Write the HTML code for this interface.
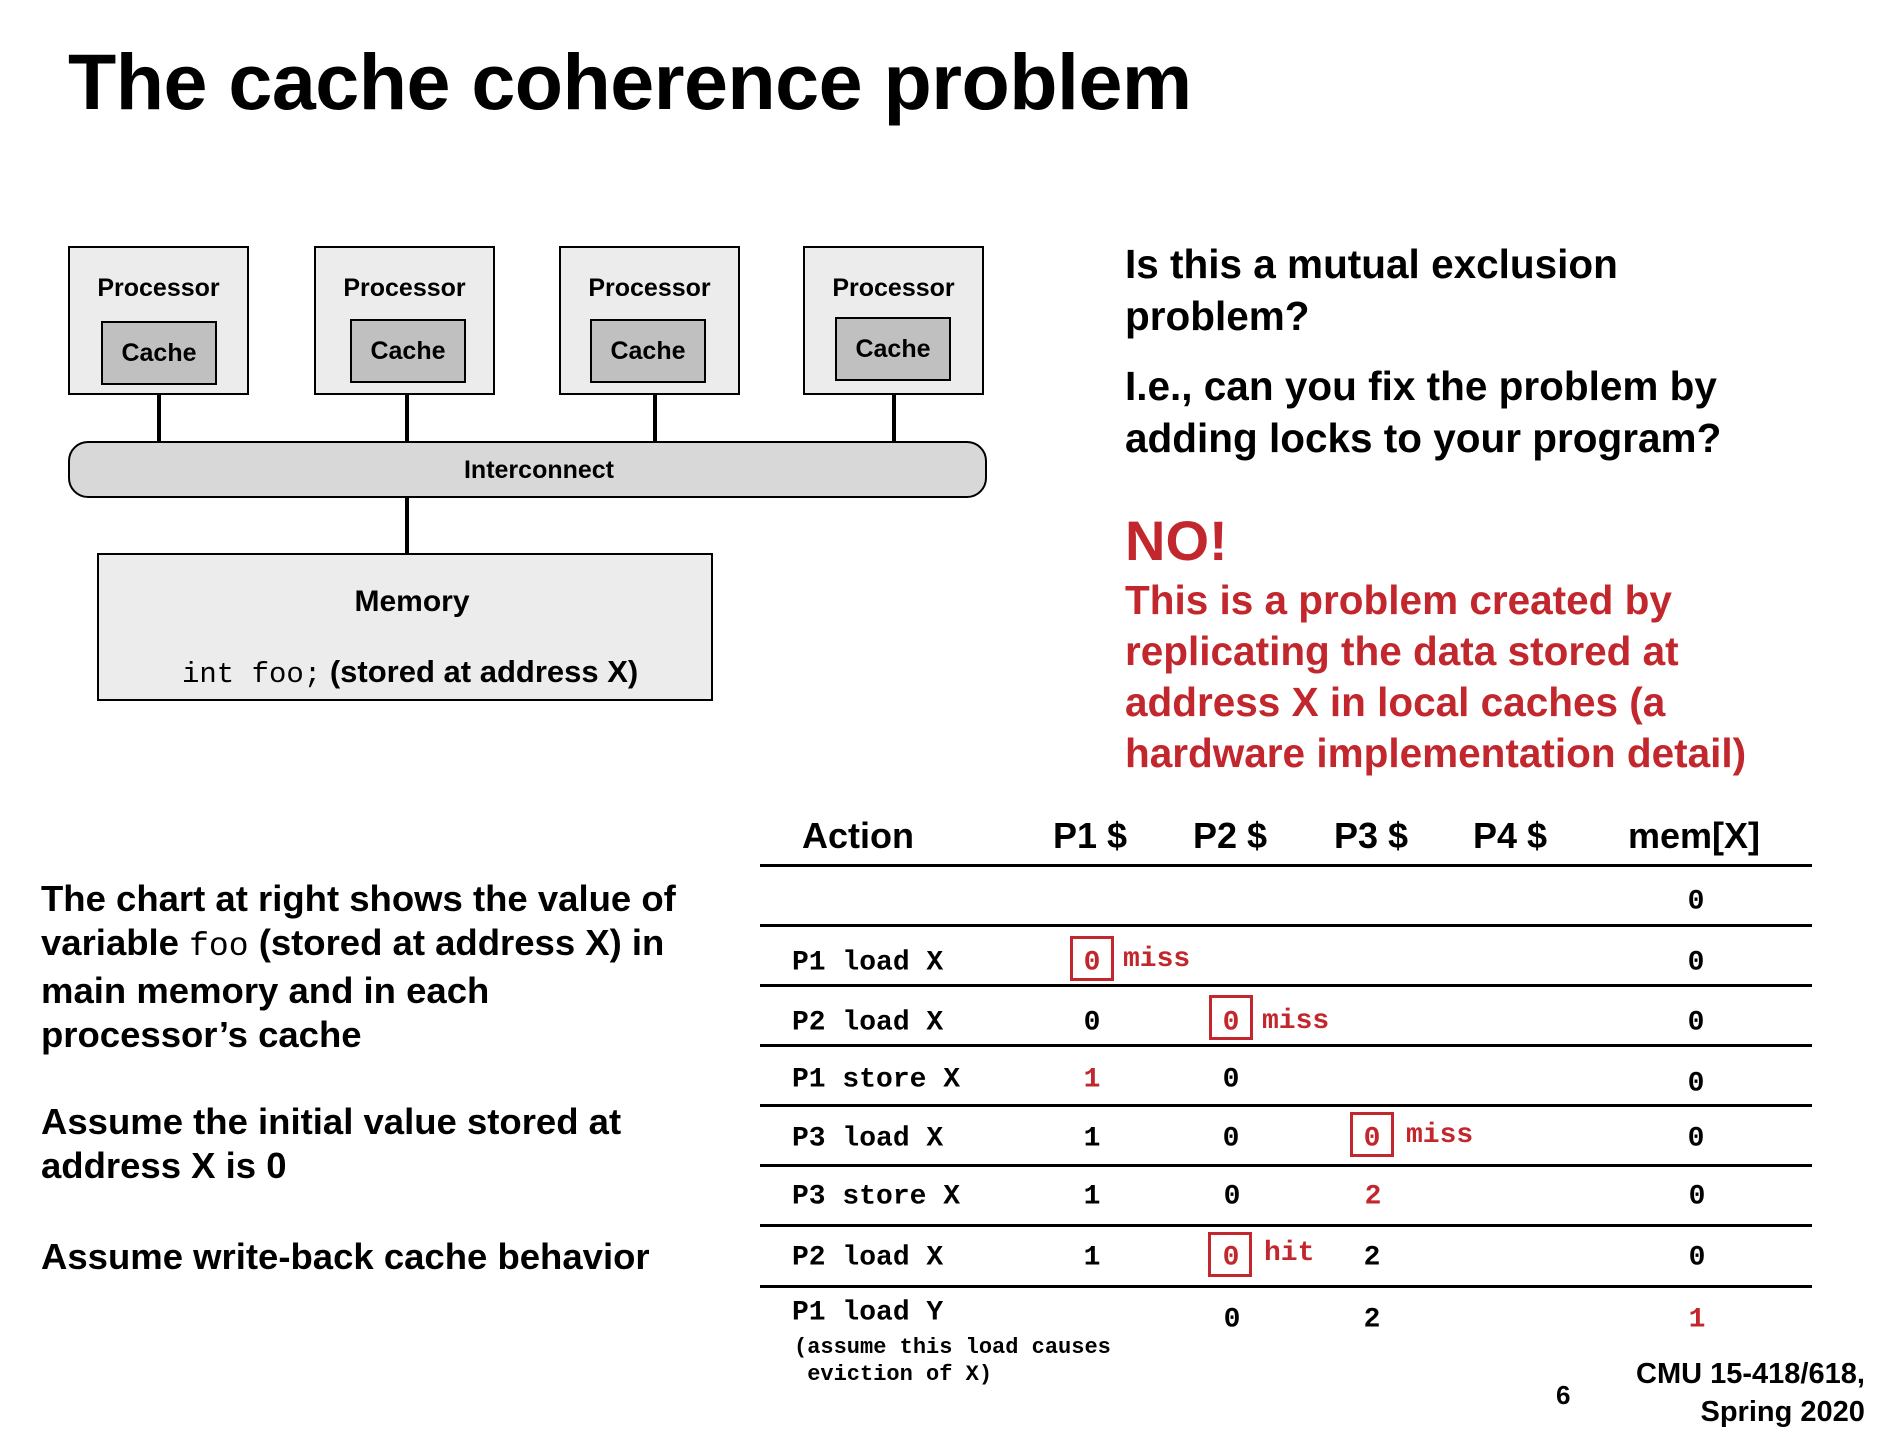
<!DOCTYPE html>
<html><head><meta charset="utf-8"><style>
*{margin:0;padding:0;box-sizing:border-box}
body{width:1884px;height:1412px;background:#fff;position:relative;overflow:hidden;font-family:"Liberation Sans",sans-serif;font-weight:bold;color:#000}
.a{position:absolute;white-space:nowrap}
.box{position:absolute;border:2.5px solid #000}
.p{background:#ececec}
.c{background:#c0c0c0;display:flex;align-items:center;justify-content:center;font-size:25px}
.pl{position:absolute;left:0;right:0;top:26px;text-align:center;font-size:25px}
.v{position:absolute;width:4px;background:#000}
.m{font-family:"Liberation Mono",monospace;font-weight:bold}
.r{color:#c1272d}
.rt{font-size:40.5px;line-height:52px}
.lt{font-size:36.5px;line-height:44px}
.hl{position:absolute;left:760px;width:1052px;height:3px;background:#000}
.cell{position:absolute;transform:translate(-50%,-50%);font-family:"Liberation Mono",monospace;font-weight:bold;font-size:28px}
.act{position:absolute;left:792px;transform:translateY(-50%);font-family:"Liberation Mono",monospace;font-weight:bold;font-size:28px}
.hd{position:absolute;transform:translate(-50%,-50%);font-size:36px}
.rb{position:absolute;border:3px solid #c1272d;width:44px;height:45px}
</style></head><body>
<div class="a" style="left:68px;top:36px;font-size:79px;letter-spacing:-0.5px">The cache coherence problem</div>

<div class="box p" style="left:68px;top:246px;width:181px;height:149px"><div class="pl">Processor</div></div>
<div class="box p" style="left:314px;top:246px;width:181px;height:149px"><div class="pl">Processor</div></div>
<div class="box p" style="left:559px;top:246px;width:181px;height:149px"><div class="pl">Processor</div></div>
<div class="box p" style="left:803px;top:246px;width:181px;height:149px"><div class="pl">Processor</div></div>
<div class="box c" style="left:101px;top:321px;width:116px;height:64px">Cache</div>
<div class="box c" style="left:350px;top:319px;width:116px;height:64px">Cache</div>
<div class="box c" style="left:590px;top:319px;width:116px;height:64px">Cache</div>
<div class="box c" style="left:835px;top:317px;width:116px;height:64px">Cache</div>
<div class="v" style="left:157px;top:394px;height:48px"></div>
<div class="v" style="left:405px;top:394px;height:48px"></div>
<div class="v" style="left:653px;top:394px;height:48px"></div>
<div class="v" style="left:892px;top:394px;height:48px"></div>
<div class="box" style="left:68px;top:441px;width:919px;height:57px;border-radius:20px;background:#d8d8d8;font-size:25px"><div class="a" style="left:0;width:920px;top:13px;text-align:center;padding-left:18px">Interconnect</div></div>
<div class="v" style="left:405px;top:497px;height:57px"></div>
<div class="box p" style="left:97px;top:553px;width:616px;height:148px">
<div class="a" style="left:0;right:0;top:30px;text-align:center;font-size:30px;padding-left:14px">Memory</div>
<div class="a" style="left:83px;top:99px;font-size:31px"><span class="m" style="font-weight:normal;font-size:29px">int foo;</span> (stored at address X)</div>
</div>

<div class="a rt" style="left:1125px;top:238px">Is this a mutual exclusion<br>problem?</div>
<div class="a rt" style="left:1125px;top:360px">I.e., can you fix the problem by<br>adding locks to your program?</div>
<div class="a r" style="left:1125px;top:508px;font-size:56px">NO!</div>
<div class="a rt r" style="left:1125px;top:575px;line-height:51px">This is a problem created by<br>replicating the data stored at<br>address X in local caches (a<br>hardware implementation detail)</div>

<div class="a lt" style="left:41px;top:877px">The chart at right shows the value of<br>variable <span class="m" style="font-weight:normal;font-size:33px">foo</span> (stored at address X) in<br>main memory and in each<br>processor’s cache</div>
<div class="a lt" style="left:41px;top:1100px">Assume the initial value stored at<br>address X is 0</div>
<div class="a lt" style="left:41px;top:1235px">Assume write-back cache behavior</div>

<div class="hd" style="left:858px;top:836px">Action</div>
<div class="hd" style="left:1090px;top:836px">P1 $</div>
<div class="hd" style="left:1230px;top:836px">P2 $</div>
<div class="hd" style="left:1371px;top:836px">P3 $</div>
<div class="hd" style="left:1510px;top:836px">P4 $</div>
<div class="hd" style="left:1694px;top:836px">mem[X]</div>
<div class="hl" style="top:864px"></div>
<div class="hl" style="top:924px"></div>
<div class="hl" style="top:984px"></div>
<div class="hl" style="top:1044px"></div>
<div class="hl" style="top:1104px"></div>
<div class="hl" style="top:1164px"></div>
<div class="hl" style="top:1224px"></div>
<div class="hl" style="top:1285px"></div>

<div class="cell" style="left:1696px;top:902px">0</div>

<div class="act" style="top:963px">P1 load X</div>
<div class="rb" style="left:1070px;top:936px"></div>
<div class="cell r" style="left:1092px;top:963px">0</div>
<div class="a m r" style="left:1123px;top:944px;font-size:28px">miss</div>
<div class="cell" style="left:1696px;top:963px">0</div>

<div class="act" style="top:1023px">P2 load X</div>
<div class="cell" style="left:1092px;top:1023px">0</div>
<div class="rb" style="left:1209px;top:995px"></div>
<div class="cell r" style="left:1231px;top:1023px">0</div>
<div class="a m r" style="left:1262px;top:1006px;font-size:28px">miss</div>
<div class="cell" style="left:1696px;top:1023px">0</div>

<div class="act" style="top:1080px">P1 store X</div>
<div class="cell r" style="left:1092px;top:1080px">1</div>
<div class="cell" style="left:1231px;top:1080px">0</div>
<div class="cell" style="left:1696px;top:1084px">0</div>

<div class="act" style="top:1139px">P3 load X</div>
<div class="cell" style="left:1092px;top:1139px">1</div>
<div class="cell" style="left:1231px;top:1139px">0</div>
<div class="rb" style="left:1350px;top:1112px"></div>
<div class="cell r" style="left:1372px;top:1139px">0</div>
<div class="a m r" style="left:1406px;top:1120px;font-size:28px">miss</div>
<div class="cell" style="left:1696px;top:1139px">0</div>

<div class="act" style="top:1197px">P3 store X</div>
<div class="cell" style="left:1092px;top:1197px">1</div>
<div class="cell" style="left:1232px;top:1197px">0</div>
<div class="cell r" style="left:1373px;top:1197px">2</div>
<div class="cell" style="left:1697px;top:1197px">0</div>

<div class="act" style="top:1258px">P2 load X</div>
<div class="cell" style="left:1092px;top:1258px">1</div>
<div class="rb" style="left:1208px;top:1232px"></div>
<div class="cell r" style="left:1231px;top:1258px">0</div>
<div class="a m r" style="left:1264px;top:1238px;font-size:28px">hit</div>
<div class="cell" style="left:1372px;top:1258px">2</div>
<div class="cell" style="left:1697px;top:1258px">0</div>

<div class="act" style="top:1313px">P1 load Y</div>
<div class="a m" style="left:794px;top:1334px;font-size:22px;line-height:27px;white-space:pre">(assume this load causes
 eviction of X)</div>
<div class="cell" style="left:1232px;top:1320px">0</div>
<div class="cell" style="left:1372px;top:1320px">2</div>
<div class="cell r" style="left:1697px;top:1320px">1</div>

<div class="a" style="left:1556px;top:1380px;font-size:26px">6</div>
<div class="a" style="left:1636px;top:1355px;font-size:29px;text-align:right;line-height:38px">CMU 15-418/618,<br>&nbsp;&nbsp;&nbsp;Spring 2020</div>
</body></html>
